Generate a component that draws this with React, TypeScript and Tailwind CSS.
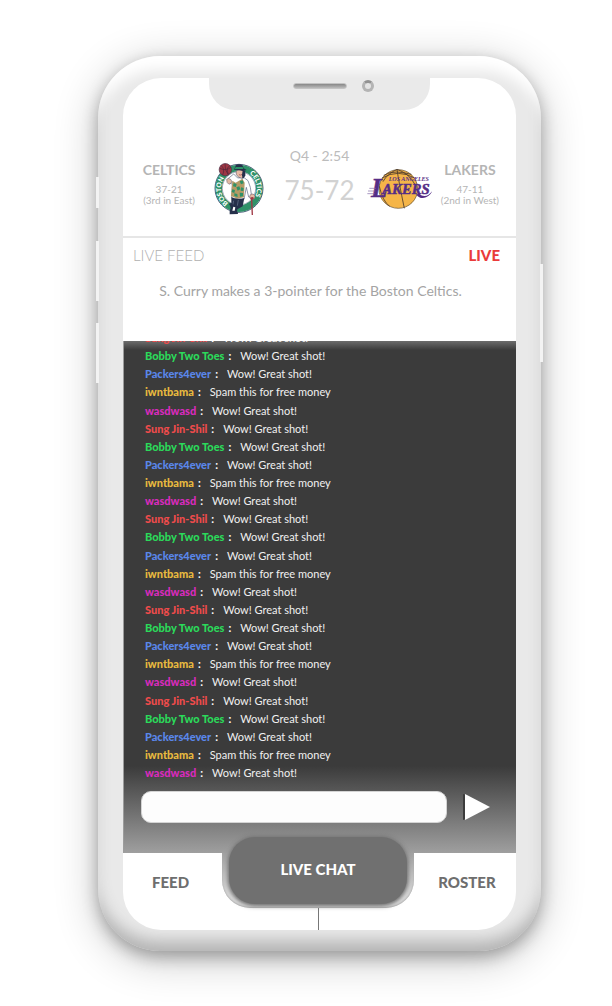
import React from "react";

type Message = { user: string; color: string; text: string };

const wow = "Wow! Great shot!";

const cycle: Message[] = [
  { user: "Sung Jin-Shil", color: "text-[#ef4b4b]", text: wow },
  { user: "Bobby Two Toes", color: "text-[#2bd95a]", text: wow },
  { user: "Packers4ever", color: "text-[#5a87ea]", text: wow },
  { user: "iwntbama", color: "text-[#e8b93f]", text: "Spam this for free money" },
  { user: "wasdwasd", color: "text-[#d92bbd]", text: wow },
];

const messages: Message[] = Array.from({ length: 25 }, (_, i) => cycle[i % cycle.length]);

function CelticsLogo() {
  return (
    <svg viewBox="400 394 156 165" className="h-[55px] w-[52px]" role="img" aria-label="Boston Celtics">
      <circle cx="478" cy="473" r="72" fill="#fff" stroke="#4b5a78" strokeWidth="3" />
      <circle cx="478" cy="473" r="61" fill="none" stroke="#2f9168" strokeWidth="20" />
      <circle cx="478" cy="473" r="50" fill="#fff" stroke="#4b5a78" strokeWidth="1.5" />
      <path id="ringLeft" d="M446 517 A54 54 0 0 1 470 420" fill="none" />
      <path id="ringRight" d="M509 429 A54 54 0 0 1 493 525" fill="none" />
      <text fill="#fff" className="font-['Lato'] text-[20px] font-black">
        <textPath href="#ringLeft">BOSTON</textPath>
      </text>
      <text fill="#fff" className="font-['Lato'] text-[20px] font-black">
        <textPath href="#ringRight">CELTICS</textPath>
      </text>
      <path d="M445 444 L462 430 L474 442 L492 440 L505 450 L512 470 L515 491 L524 494 L520 502 L507 499 L500 470 L493 506 L456 502 L458 460 L450 458 Z" fill="#fff" stroke="#5b6580" strokeWidth="2" />
      <path d="M458 450 L468 456 L488 444 L495 456 L493 500 L474 504 L454 496 Z" fill="#b49a66" />
      <path d="M462 457 l9 3 -2 9 -9 -2z M480 452 l9 -3 3 9 -8 3z M470 470 l9 -3 3 9 -8 4z M458 476 l8 2 -2 9 -8 -3z M484 470 l8 2 -1 9 -8 -1z M464 488 l9 2 1 9 -10 -3z M480 486 l10 1 0 10 -9 1z" fill="#2f9168" />
      <path d="M441 446 q6 -6 13 1 l3 8 -9 6 q-8 -4 -7 -15z" fill="#e2b9a2" stroke="#5b5563" strokeWidth="1.5" />
      <path d="M469 421 q12 -8 25 -1 l1 14 -8 9 -10 -3 -7 -8z" fill="#e6b9a3" stroke="#33405c" strokeWidth="1.5" />
      <path d="M489 418 l8 3 0 14 -8 11 -2 -12z" fill="#26304a" />
      <path d="M463 417 l6 -14 q10 -5 19 1 l4 9 9 5 -11 3 -15 -3z" fill="#26304a" />
      <path d="M468 409 l21 0 2 6 -26 0z" fill="#2f9168" />
      <path d="M478 432 q5 3 9 -1" stroke="#963b45" strokeWidth="2" fill="none" />
      <path d="M455 500 q20 9 39 2 l-5 25 -16 9 -1 7 -12 -2 -6 -15 -6 -4 7 -5z" fill="#26304a" />
      <path d="M462 510 l-3 17 M476 508 l-3 17" stroke="#8390a8" strokeWidth="1.5" />
      <path d="M449 517 l14 5 -1 14 12 7 1 7 -25 1 0 -10 3 -9z" fill="#26304a" />
      <path d="M461 528 l6 2 -2 10 -7 0z" fill="#fff" />
      <circle cx="518" cy="498" r="8" fill="#e6b9a3" stroke="#5b5563" strokeWidth="1.5" />
      <path d="M512 501 q8 -5 11 2 l-5 4 2 46 -4 0 -2 -44z" fill="#9f3744" />
      <circle cx="437" cy="417" r="18.5" fill="#9f3744" stroke="#4b3048" strokeWidth="2" />
      <path d="M420 413 q18 9 34 -3 M436 399 q-2 18 10 34 M424 404 q13 11 5 29 M451 405 q-14 7 -5 25" stroke="#4b2638" strokeWidth="2" fill="none" />
    </svg>
  );
}

function LakersLogo() {
  return (
    <svg viewBox="141 417 198 126" className="h-[42px] w-[66px]" role="img" aria-label="Los Angeles Lakers">
      <circle cx="235" cy="480" r="58" fill="#f5b548" stroke="#5f4a2b" strokeWidth="2" />
      <path d="M231 421 q5 36 22 117 M186 447 q48 -28 98 0 M178 472 q10 45 31 60 M231 421 q-30 14 -42 37 M231 421 q36 12 53 44 M191 439 q15 -10 40 -10 q20 1 43 7" fill="none" stroke="#4c3a2c" strokeWidth="2.5" />
      <g className="font-['Liberation_Serif'] font-bold italic" fill="#552d86">
        <text x="206" y="457" className="text-[18px]">LOS ANGELES</text>
        <g stroke="#552d86" strokeWidth="1.5">
          <text x="153" y="504" className="text-[80px]">L</text>
          <text x="187" y="495" className="text-[44px]">AKERS</text>
        </g>
      </g>
      <path d="M148 478 h20 M144 486 h22 M142 494 h22" stroke="#8067a5" strokeWidth="2" />
      <path d="M289 497 q12 15 29 8 q15 -7 18 -18 q-10 14 -22 14 q-13 0 -16 -9z" fill="#552d86" />
    </svg>
  );
}

function Team({ name, record, place }: { name: string; record: string; place: string }) {
  return (
    <div className="flex flex-col items-center pt-1 whitespace-nowrap text-[#b5b5b5]">
      <h2 className="text-[14px] leading-5 font-bold">{name}</h2>
      <p className="mt-1 text-[10px] leading-[11px]">{record}</p>
      <p className="text-[10px] leading-[11px]">{place}</p>
    </div>
  );
}

function Notch() {
  return (
    <div className="mx-auto flex h-8 w-[221px] items-start justify-center rounded-b-[26px] bg-[#eaeaea]">
      <div className="mt-[2px] ml-[84px] flex items-center gap-[15px]">
        <span className="h-[6px] w-[54px] rounded-full border border-[#c4c4c4] bg-linear-to-b from-[#888] to-[#bbb]" />
        <span className="size-3 rounded-full border-[3px] border-[#b4b4b4] border-t-[#929292] bg-[#e4e4e4]" />
        <span className="w-[42px]" />
      </div>
    </div>
  );
}

export default function App() {
  return (
    <main className="min-h-screen bg-white pt-14 pr-[71px] pb-[55px] pl-[98px] font-['Lato',sans-serif]">
      <div className="relative mx-auto max-w-[443px] rounded-[62px] bg-[#e9e9e9] px-[25px] pt-[22px] pb-[21px] shadow-[0_8px_44px_rgba(0,0,0,0.24),0_6px_16px_rgba(0,0,0,0.28),inset_0_20px_14px_-6px_#ffffff,inset_0_-14px_16px_-4px_#b4b4b4]">
        <span className="absolute top-[121px] -left-[2px] h-[31px] w-[3px] bg-[#f3f3f3]" />
        <span className="absolute top-[185px] -left-[2px] h-[60px] w-[3px] bg-[#f3f3f3]" />
        <span className="absolute top-[267px] -left-[2px] h-[60px] w-[3px] bg-[#f3f3f3]" />
        <span className="absolute top-[208px] -right-[2px] h-[98px] w-[3px] bg-[#f3f3f3]" />

        <div className="overflow-hidden rounded-[38px] bg-white">
          <header className="border-b-2 border-[#e6e6e6]">
            <Notch />
            <div className="grid grid-cols-[3fr_4fr_4fr_4fr_3fr] items-center px-4 pt-[34px] pb-[19px]">
              <Team name="CELTICS" record="37-21" place="(3rd in East)" />
              <div className="flex justify-center pt-[18px]">
                <CelticsLogo />
              </div>
              <div className="flex flex-col items-center whitespace-nowrap">
                <p className="text-[14px] leading-5 text-[#bcbcbc]">Q4 - 2:54</p>
                <p className="mt-2 mb-[10px] text-[26px] leading-8 text-[#d2d2d2]">75-72</p>
              </div>
              <div className="flex justify-center pt-4">
                <LakersLogo />
              </div>
              <Team name="LAKERS" record="47-11" place="(2nd in West)" />
            </div>
          </header>

          <section className="h-[103px] pr-4 pl-[10px]">
            <div className="flex items-center justify-between pt-[7px]">
              <h2 className="text-[15px] leading-5 font-light text-[#b0b0b0]">LIVE FEED</h2>
              <span className="text-[15px] leading-5 font-black text-[#ea3b3b]">LIVE</span>
            </div>
            <p className="mt-4 pr-3 text-center text-[14px] leading-5 text-[#a4a4a4]">
              S. Curry makes a 3-pointer for the Boston Celtics.
            </p>
          </section>

          <section className="border-l border-[#9c9c9c] bg-[linear-gradient(to_bottom,#6c6c6c_0,#3b3b3b_9px,#3b3b3b_425px,#9f9f9f_512px)]">
            <div className="flex h-[441px] flex-col justify-end overflow-hidden">
              <ul className="flex h-[453px] shrink-0 flex-col pl-[21px] text-[11px] leading-[18px]">
                {messages.map((m, i) => (
                  <li key={i} className="flex flex-1 items-center whitespace-nowrap text-white">
                    <span className={`font-black ${m.color}`}>{m.user}</span>
                    <span className="ml-1 font-bold">:</span>
                    <span className="ml-[9px] text-[#f0f0f0]">{m.text}</span>
                  </li>
                ))}
              </ul>
            </div>
            <form className="flex items-center pt-[9px] pr-[26px] pb-[30px] pl-[17px]" onSubmit={(e) => e.preventDefault()}>
              <input
                type="text"
                aria-label="Message"
                className="h-8 min-w-0 flex-1 rounded-[10px] border border-[#d4d4d4] bg-[#fdfdfd] px-3 text-[13px] outline-none"
              />
              <button type="submit" aria-label="Send" className="ml-4">
                <svg viewBox="0 0 27 28" className="h-7 w-[27px]">
                  <path d="M0 1 V27 L3 26 V2 Z" fill="#3c3c3c" />
                  <path d="M2 1 L27 14 L2 27 Z" fill="#fff" />
                </svg>
              </button>
            </form>
          </section>

          <nav className="grid h-[77px] grid-cols-[99fr_192fr_102fr] text-[15px] text-[#6e6e6e]">
            <button type="button" className="h-[58px] pr-1 font-black">FEED</button>
            <div className="flex flex-col items-center">
              <div className="flex h-[55px] w-full justify-center rounded-b-[28px] bg-linear-to-b from-[#a0a0a0] to-[#ececec] shadow-[inset_0_-1px_2px_#aaa]">
                <button type="button" className="-mt-4 h-[67px] w-[178px] rounded-[26px] bg-[#707070] pb-[2px] font-black text-white shadow-[0_0_4px_#707070,0_2px_5px_#777]">
                  LIVE CHAT
                </button>
              </div>
              <span className="w-px flex-1 bg-[#777]" />
            </div>
            <button type="button" className="h-[58px] pl-1 font-black">ROSTER</button>
          </nav>
        </div>
      </div>
    </main>
  );
}
